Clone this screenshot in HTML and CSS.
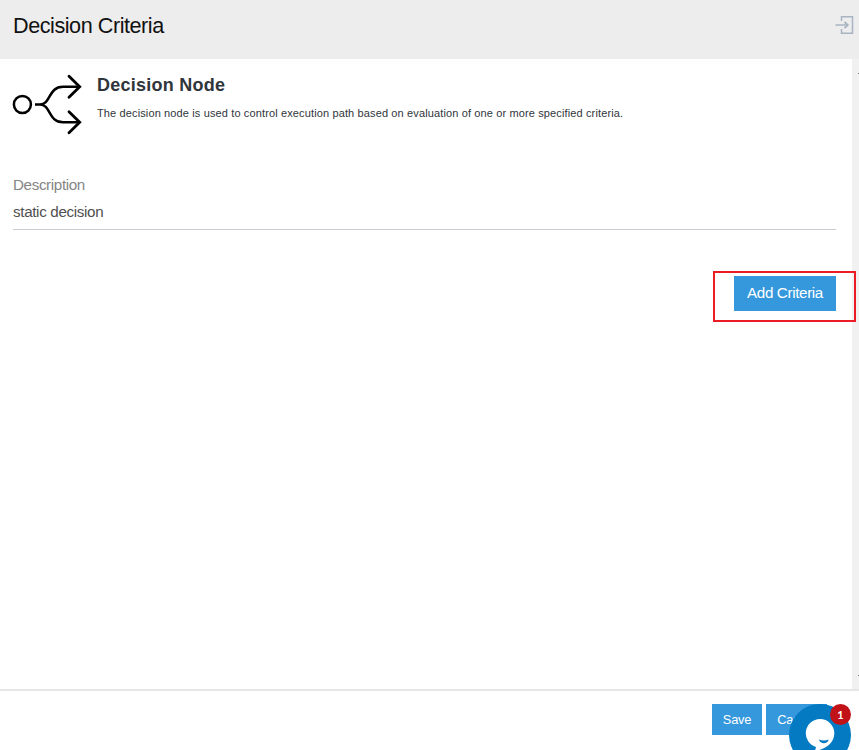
FILE: index.html
```html
<!DOCTYPE html>
<html lang="en">
<head>
<meta charset="utf-8">
<title>Decision Criteria</title>
<link rel="stylesheet" href="styles.css">
</head>
<body>
<header class="header">
  <h1 class="title">Decision Criteria</h1>
  <svg class="exit" width="20" height="20" viewBox="0 0 20 20" fill="none" stroke="#a9b4c2" stroke-width="1.5">
    <path d="M6.500 6V1.700h11v16.600h-11V14M.5 10h11"/>
    <path d="M9.500 6.800l3.200 3.200-3.200 3.200" stroke-width="1.900"/>
  </svg>
</header>
<main class="main">
  <div class="content">
    <section class="intro">
      <svg class="node-icon" width="72" height="62" viewBox="0 0 72 62" fill="none" stroke="#000" stroke-width="2.500">
        <circle cx="10.400" cy="31.500" r="8.500"/>
        <path d="M23 31.500h5C39 31.500 36 13.800 51 13.800h17M28 31.500C39 31.500 36 49.300 51 49.300h17"/>
        <path d="M57 3.300L67.700 13.800 57 24.300M57 38.800L67.700 49.300 57 59.800" stroke-width="2.800" stroke-linecap="round"/>
      </svg>
      <div class="intro-text">
        <h2 class="name">Decision Node</h2>
        <p class="summary">The decision node is used to control execution path based on evaluation of one or more specified criteria.</p>
      </div>
    </section>
    <div class="field">
      <div class="label">Description</div>
      <div class="value">static decision</div>
    </div>
    <div class="actions">
      <div class="highlight"><button class="btn add">Add Criteria</button></div>
    </div>
  </div>
  <div class="scrollbar"><span class="tick"></span><span class="tick"></span></div>
</main>
<footer class="footer">
  <button class="btn small save">Save</button>
  <button class="btn small cancel">Cancel</button>
</footer>
<div class="chat">
  <svg width="62" height="62" viewBox="0 0 62 62">
    <circle cx="31" cy="31" r="31" fill="#047ac2"/>
    <path d="M31 15a14.300 14.300 0 0 1 14.300 14.300C45.300 38 38 45 26 47l1-4A14.300 14.300 0 0 1 31 15z" fill="#fff"/>
    <path d="M30 35.500q5 2 9.700 0c-1 5-8.700 5-9.700 0z" fill="#047ac2"/>
  </svg>
  <span class="badge">1</span>
</div>
</body>
</html>
```
FILE: styles.css
```css
* { box-sizing: border-box; }
body {
  margin: 0;
  height: 750px;
  display: flex;
  flex-direction: column;
  overflow: hidden;
  background: #fff;
  font-family: "Liberation Sans", Arial, sans-serif;
}
.header {
  height: 59px;
  flex: none;
  display: flex;
  justify-content: space-between;
  padding: 15px 4px 0 13px;
  background: #ededed;
}
.title { margin: -1px 0 0; font-size: 21.6px; line-height: 24px; letter-spacing: -.45px; font-weight: 400; color: #111; }
.exit { flex: none; }
.main { height: 630px; display: flex; }
.content { flex: 1; padding: 14px 16px 0 13px; min-width: 0; }
.intro { display: flex; height: 62px; }
.node-icon { flex: none; margin-left: -1px; }
.intro-text { margin-left: 13px; white-space: nowrap; }
.name { margin: 2px 0 0; font-size: 18px; line-height: 20px; letter-spacing: .25px; color: #30353b; }
.summary { margin: 11px 0 0; font-size: 11px; line-height: 14px; letter-spacing: .13px; color: #30353b; }
.field { margin-top: 41px; height: 54px; border-bottom: 1px solid #c8cbd2; font-size: 15.2px; line-height: 18px; letter-spacing: -.37px; }
.label { color: #858585; }
.value { margin-top: 9px; color: #505050; letter-spacing: -.34px; }
.actions { display: flex; justify-content: flex-end; margin: 41px -20px 0 0; position: relative; }
.highlight { width: 143px; height: 51px; border: 2px solid #ed1c24; padding: 3px 0 0 19px; }
.btn { display: block; border: 0; padding: 0; background: #3598dc; color: #fff; font-family: inherit; }
.add { width: 102px; height: 35px; padding-bottom: 2px; font-size: 15.2px; letter-spacing: -.36px; }
.scrollbar {
  width: 7px;
  flex: none;
  display: flex;
  flex-direction: column;
  justify-content: space-between;
  align-items: flex-end;
  padding: 14px 0 13px;
  background: #f1f1f1;
}
.tick { width: 1px; height: 1px; background: #777; }
.footer { flex: 1; display: flex; gap: 4px; border-top: 2px solid #e6e6e6; padding: 13px 0 0 712px; }
.small { height: 31px; padding-bottom: 1px; font-size: 12.8px; letter-spacing: -.2px; flex: none; }
.save { width: 50px; }
.cancel { width: 61px; }
.chat { position: absolute; left: 789px; top: 704px; width: 62px; height: 46px; overflow: hidden; }
.badge {
  position: absolute;
  left: 41px;
  top: 0;
  width: 21px;
  height: 21px;
  border-radius: 50%;
  background: #c01217;
  color: #fff;
  font: 700 11px/21px Lato, sans-serif;
  text-align: center;
}
```
